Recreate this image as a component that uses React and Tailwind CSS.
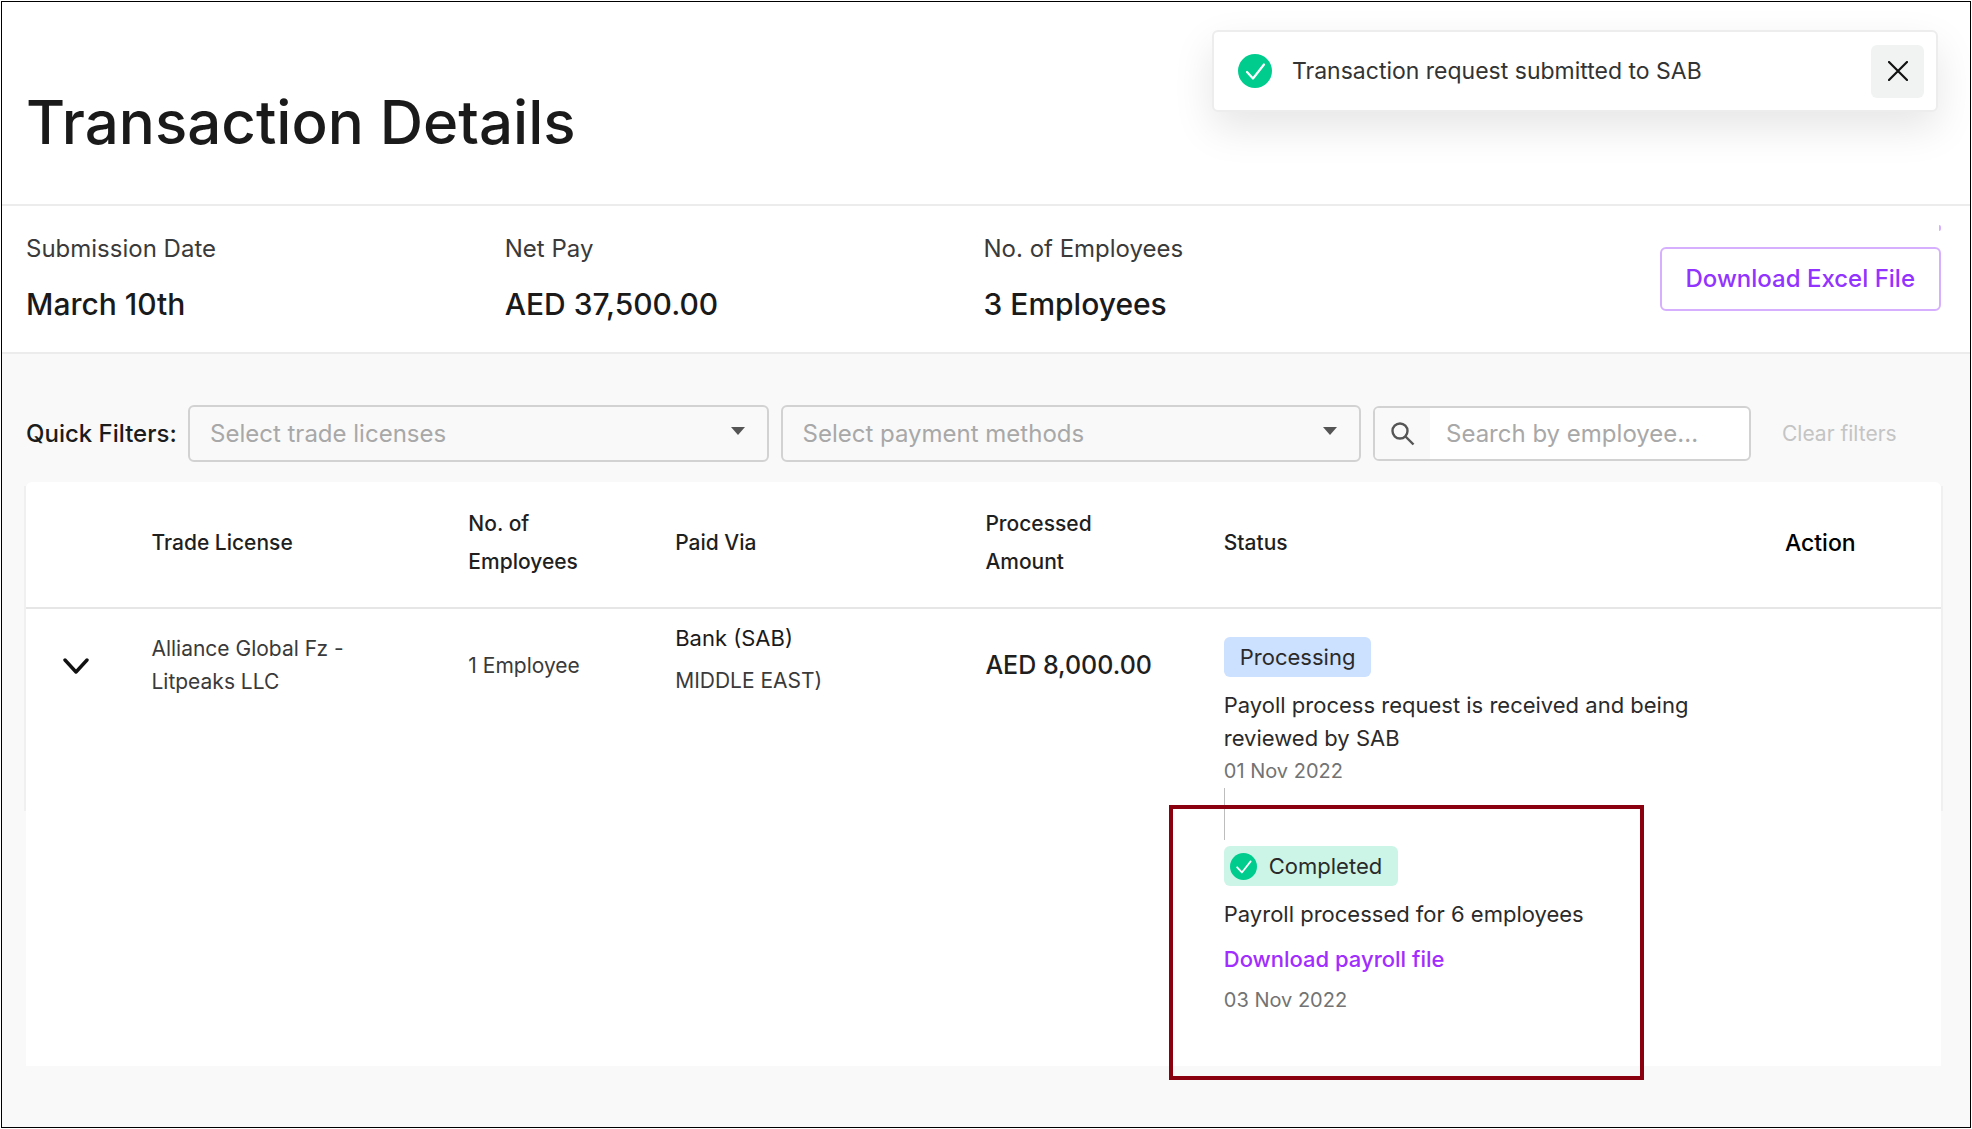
const summary = [
  { label: 'Submission Date', value: 'March 10th' },
  { label: 'Net Pay', value: 'AED 37,500.00' },
  { label: 'No. of Employees', value: '3 Employees' },
];

const filters = [
  { id: 'licenses', placeholder: 'Select trade licenses' },
  { id: 'methods', placeholder: 'Select payment methods' },
];

function CheckCircle({ className }) {
  return (
    <svg viewBox="0 0 34 34" fill="none" className={className} aria-hidden="true">
      <circle cx="17" cy="17" r="17" fill="#00cc8e" />
      <path d="M9 18l6 6.5L26 10.5" stroke="#fff" strokeWidth="2.2" strokeLinecap="round" strokeLinejoin="round" />
    </svg>
  );
}

function Toast() {
  return (
    <div
      role="status"
      className="absolute top-[28px] right-[32px] flex h-[82px] w-[726px] items-center rounded-md border-2 border-[#ededed] bg-white pr-3 pl-6 shadow-[0_16px_40px_rgba(0,0,0,0.1)]"
    >
      <CheckCircle className="size-[34px]" />
      <span className="ml-5 text-[23px] text-[#333]">Transaction request submitted to SAB</span>
      <button type="button" aria-label="Close" className="ml-auto flex size-[53px] items-center justify-center rounded-md bg-[#f1f3f3]">
        <svg viewBox="0 0 20 20" className="size-5" fill="none" stroke="#111" strokeWidth="2.2" strokeLinecap="round" aria-hidden="true">
          <path d="M1 1l18 18M19 1L1 19" />
        </svg>
      </button>
    </div>
  );
}

function FilterSelect({ id, placeholder }) {
  return (
    <div className="relative flex-1">
      <select
        id={id}
        aria-label={placeholder}
        className="h-[57px] w-full appearance-none rounded-md border-2 border-[#d2d2d2] bg-[#f9f9f9] pr-12 pl-5 text-[24px] text-[#a8a8a8]"
      >
        <option>{placeholder}</option>
      </select>
      <svg viewBox="0 0 14 8" className="pointer-events-none absolute top-[22px] right-6 h-2 w-[14px]" aria-hidden="true">
        <path d="M0 0h14L7 8z" fill="#555" />
      </svg>
    </div>
  );
}

function Filters() {
  return (
    <div className="flex items-center">
      <span className="mr-3 w-[150px] shrink-0 text-[24px] font-medium whitespace-nowrap text-[#1c1c1c]">Quick Filters:</span>
      <div className="flex flex-1 gap-3">
        {filters.map((filter) => (
          <FilterSelect key={filter.id} {...filter} />
        ))}
      </div>
      <label className="ml-3 flex h-[55px] w-[378px] overflow-hidden rounded-md border-2 border-[#d2d2d2] bg-white">
        <span className="flex w-[55px] shrink-0 items-center justify-center bg-[#f9f9f9]">
          <svg viewBox="0 0 24 24" className="size-6" fill="none" stroke="#555" strokeWidth="2.4" aria-hidden="true">
            <circle cx="9" cy="9" r="7.5" />
            <path d="M14.5 14.5l8 8" />
          </svg>
        </span>
        <input
          type="text"
          aria-label="Search by employee"
          placeholder="Search by employee..."
          className="w-full min-w-0 pl-4 text-[24px] outline-none placeholder:text-[#a8a8a8]"
        />
      </label>
      <button type="button" className="mr-[43px] ml-[31px] w-[116px] text-left text-[21px] whitespace-nowrap text-[#c4c4c4]">
        Clear filters
      </button>
    </div>
  );
}

function StatusTimeline() {
  return (
    <ol className="text-[22px] leading-[33px] text-[#2a2a2a]">
      <li>
        <span className="inline-flex h-10 items-center rounded-md bg-[#cce0ff] px-4 align-top">Processing</span>
        <p className="mt-3">
          Payoll process request is received and being
          <br />
          reviewed by SAB
        </p>
        <p className="text-[20px] text-[#737373]">01 Nov 2022</p>
        <div className="h-[52px] w-px bg-[#bdbdbd]" />
      </li>
      <li className="relative mt-[6px]">
        <span className="inline-flex h-10 items-center rounded-md bg-[#ccf5e8] pr-4 pl-[6px] align-top">
          <CheckCircle className="mr-3 size-[27px]" />
          Completed
        </span>
        <p className="mt-3">Payroll processed for 6 employees</p>
        <a href="#payroll" className="mt-3 block font-medium text-[#a12dff]">Download payroll file</a>
        <p className="mt-2 text-[20px] text-[#737373]">03 Nov 2022</p>
        {/* highlight frame around the completed step */}
        <div className="pointer-events-none absolute -top-[41px] -left-[55px] h-[275px] w-[475px] border-4 border-[#8b000f]" />
      </li>
    </ol>
  );
}

function PayrollTable() {
  return (
    <div className="relative mt-5 min-h-[584px] rounded-t-md bg-white">
      <span className="absolute top-1 -left-[2px] h-[325px] w-[2px] bg-[#f0f0f0]" />
      <span className="absolute top-1 -right-[2px] h-[325px] w-[2px] bg-[#f0f0f0]" />
      <table className="w-full table-fixed text-left text-[21px] leading-[33px] text-[#3a3a3a]">
        <colgroup>
          <col className="w-[6.55%]" />
          <col className="w-[16.55%]" />
          <col className="w-[10.8%]" />
          <col className="w-[16.2%]" />
          <col className="w-[12.45%]" />
          <col className="w-[29.3%]" />
          <col />
        </colgroup>
        <thead>
          <tr className="h-[126px] border-b-2 border-[#e6e6e6] leading-[38px] text-[#1f1f1f] [&>th]:pb-[3px] [&>th]:font-medium">
            <th aria-label="Expand" />
            <th>Trade License</th>
            <th>No. of<br />Employees</th>
            <th>Paid Via</th>
            <th>Processed<br />Amount</th>
            <th>Status</th>
            <th className="text-[23px] text-black">Action</th>
          </tr>
        </thead>
        <tbody>
          <tr className="align-top">
            <td className="pt-10">
              <button type="button" aria-label="Expand row" className="flex h-[33px] w-[100px] items-center justify-center">
                <svg viewBox="0 0 26 16" className="h-4 w-[26px]" fill="none" stroke="#111" strokeWidth="3.4" strokeLinejoin="round" strokeLinecap="round" aria-hidden="true">
                  <path d="M2 2l11 12L24 2" />
                </svg>
              </button>
            </td>
            <td className="pt-[23px]">Alliance Global Fz -<br />Litpeaks LLC</td>
            <td className="pt-10">1 Employee</td>
            <td className="pt-2 leading-[42px]">
              <span className="text-[22px] text-[#1a1a1a]">Bank (SAB)</span>
              <br />
              MIDDLE EAST)
            </td>
            <td className="pt-10 text-[25px] font-medium whitespace-nowrap text-[#1f1f1f]">AED 8,000.00</td>
            <td className="pt-7">
              <StatusTimeline />
            </td>
            <td />
          </tr>
        </tbody>
      </table>
    </div>
  );
}

export default function App() {
  return (
    <div className="flex min-h-screen bg-white p-px font-['Inter',sans-serif]">
      <main className="relative flex flex-1 flex-col border border-black">
        <header className="border-b-2 border-[#ececec] px-6 pt-[82px] pb-[44px]">
          <h1 className="text-[60px] leading-[76px] font-medium text-[#1a1a1a]">Transaction Details</h1>
        </header>
        <Toast />

        <section className="grid grid-cols-4 border-b-2 border-[#ececec] pt-[23px] pr-[29px] pb-[28px] pl-6">
          {summary.map((item) => (
            <div key={item.label}>
              <p className="text-[24px] leading-[40px] text-[#3a3a3a]">{item.label}</p>
              <p className="mt-[15px] text-[30px] leading-[40px] font-medium text-[#1a1a1a]">{item.value}</p>
            </div>
          ))}
          <div className="relative flex items-start justify-end pt-[18px]">
            <span className="absolute -top-1 right-0 h-[6px] w-[2px] rounded-r bg-[#d6b0ff]" />
            <button type="button" className="h-[64px] rounded-md border-2 border-[#d6b0ff] px-6 text-[24px] font-medium text-[#9333ff]">
              Download Excel File
            </button>
          </div>
        </section>

        <section className="flex-1 bg-[#f9f9f9] pt-[51px] pr-[29px] pb-[60px] pl-6">
          <Filters />
          <PayrollTable />
        </section>
      </main>
    </div>
  );
}
